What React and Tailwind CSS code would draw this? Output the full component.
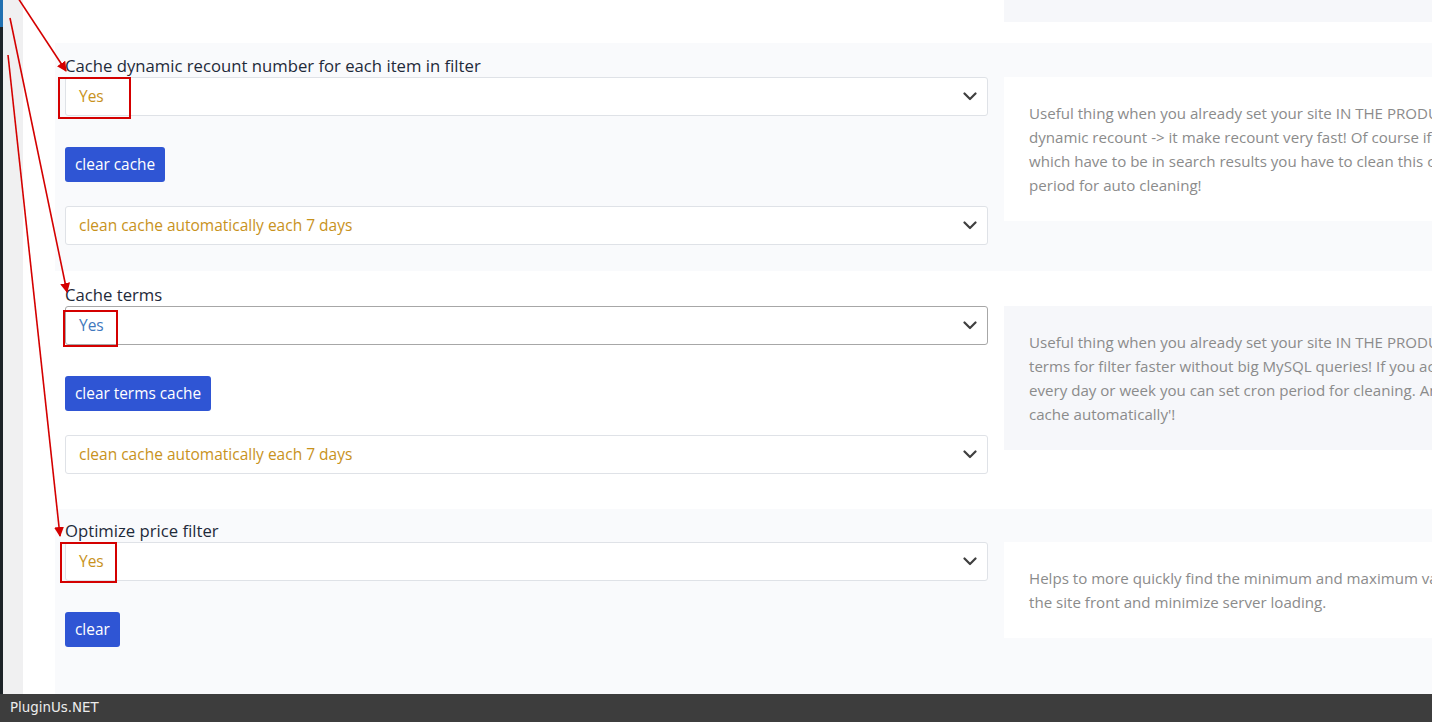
import { useState } from 'react'

const descFirst = [
  'Useful thing when you already set your site IN THE PRODUCTION MODE - use it for',
  'dynamic recount -> it make recount very fast! Of course if you added new products',
  'which have to be in search results you have to clean this cache OR you can set time',
  'period for auto cleaning!',
]

const descTerms = [
  'Useful thing when you already set your site IN THE PRODUCTION MODE - use it for getting',
  'terms for filter faster without big MySQL queries! If you actively adds new terms',
  'every day or week you can set cron period for cleaning. And also you can set \'clean',
  'cache automatically\'!',
]

const descPrice = [
  'Helps to more quickly find the minimum and maximum values for the price filter on',
  'the site front and minimize server loading.',
]

function Chevron() {
  return (
    <svg width="14" height="9" viewBox="0 0 14 9" className="shrink-0">
      <path d="M1.5 1.5 L7 7 L12.5 1.5" fill="none" stroke="#3f3f3f" strokeWidth="2.2" strokeLinecap="round" strokeLinejoin="round" />
    </svg>
  )
}

function FakeSelect({ value, color = 'text-[#c8921c]', focused = false }) {
  return (
    <div
      className={`h-[39px] flex items-center justify-between pl-[13px] pr-[10px] bg-white rounded-[3px] border ${
        focused ? 'border-[#a7a7a7]' : 'border-[#dfe2e7]'
      }`}
    >
      <span className={`text-[15.5px] ${color}`}>{value}</span>
      <Chevron />
    </div>
  )
}

function Button({ children }) {
  return (
    <button
      type="button"
      className="h-[35px] px-[10px] rounded-[3px] bg-[#2f55d4] text-white text-[15.4px] leading-none"
    >
      {children}
    </button>
  )
}

function Description({ lines, light }) {
  return (
    <div className={`w-[560px] shrink-0 pl-[25px] pr-6 pt-[24px] pb-[24px] overflow-hidden ${light ? 'bg-[#f6f7fa]' : 'bg-white'}`}>
      {lines.map((line) => (
        <div key={line} className="whitespace-nowrap text-[15.1px] leading-[24px] text-[#8b8b8b]">
          {line}
        </div>
      ))}
    </div>
  )
}

function Section({ label, light, top, bottom, children, desc }) {
  return (
    <div className={`shrink-0 pl-[10px] ${top} ${bottom} ${light ? 'bg-[#f9fafc]' : 'bg-white'}`}>
      <div className="h-[22px] leading-[22px] text-[16.7px] text-[#1f2a3a] whitespace-nowrap">{label}</div>
      <div className="flex items-start gap-4">
        <div className="w-[923px] shrink-0 flex flex-col">{children}</div>
        <Description lines={desc} light={!light} />
      </div>
    </div>
  )
}

export default function App() {
  const [cached] = useState('Yes')

  return (
    <div className="relative h-screen w-full overflow-hidden flex flex-col bg-white" style={{ fontFamily: '"Open Sans", "Liberation Sans", sans-serif' }}>
      <div className="flex flex-1 min-h-0 overflow-hidden">
        <div className="w-[3px] shrink-0 flex flex-col bg-[#1d2327]">
          <div className="h-[27px] bg-[#2271b1]" />
        </div>
        <div className="w-[20px] shrink-0 bg-[#f0f0f1]" />
        <div className="w-[32px] shrink-0 bg-white" />
        <div className="flex-1 min-w-0 flex flex-col">
          <div className="h-[43px] shrink-0 bg-white pl-[10px] flex gap-4">
            <div className="w-[923px] shrink-0" />
            <div className="w-[560px] shrink-0 h-[22px] bg-[#f6f7fa]" />
          </div>

          <Section label="Cache dynamic recount number for each item in filter" light top="pt-[12px]" bottom="pb-[26px]" desc={descFirst}>
            <FakeSelect value={cached} />
            <div className="mt-[31px]">
              <Button>clear cache</Button>
            </div>
            <div className="mt-[24px]">
              <FakeSelect value="clean cache automatically each 7 days" />
            </div>
          </Section>

          <Section label="Cache terms" top="pt-[13px]" bottom="pb-[35px]" desc={descTerms}>
            <FakeSelect value="Yes" color="text-[#3f78bd]" focused />
            <div className="mt-[31px]">
              <Button>clear terms cache</Button>
            </div>
            <div className="mt-[24px]">
              <FakeSelect value="clean cache automatically each 7 days" />
            </div>
          </Section>

          <Section label="Optimize price filter" light top="pt-[11px]" bottom="pb-[60px]" desc={descPrice}>
            <FakeSelect value="Yes" />
            <div className="mt-[31px]">
              <Button>clear</Button>
            </div>
          </Section>
        </div>
      </div>

      <div
        className="h-[28px] shrink-0 bg-[#3d3d3d] flex items-center pl-[10px] text-[13.4px] text-[#ececec]"
        style={{ fontFamily: '"DejaVu Sans", sans-serif' }}
      >
        PluginUs.NET
      </div>

      {/* annotation boxes */}
      <div className="absolute left-[58px] top-[77px] w-[73px] h-[42px] border-2 border-[#d40000]" />
      <div className="absolute left-[63px] top-[310px] w-[55px] h-[37px] border-2 border-[#d40000]" />
      <div className="absolute left-[60px] top-[542px] w-[57px] h-[41px] border-2 border-[#d40000]" />

      {/* annotation arrows */}
      <svg className="absolute inset-0 pointer-events-none" width="1432" height="722">
        <defs>
          <marker id="head" markerWidth="10" markerHeight="10" refX="9" refY="5" orient="auto" markerUnits="userSpaceOnUse">
            <path d="M0 0 L10 5 L0 10 Z" fill="#d40000" />
          </marker>
        </defs>
        <line x1="18" y1="-2" x2="66" y2="71" stroke="#d40000" strokeWidth="1.6" markerEnd="url(#head)" />
        <line x1="10" y1="18" x2="67" y2="292" stroke="#d40000" strokeWidth="1.6" markerEnd="url(#head)" />
        <line x1="8" y1="55" x2="60" y2="536" stroke="#d40000" strokeWidth="1.6" markerEnd="url(#head)" />
      </svg>
    </div>
  )
}
